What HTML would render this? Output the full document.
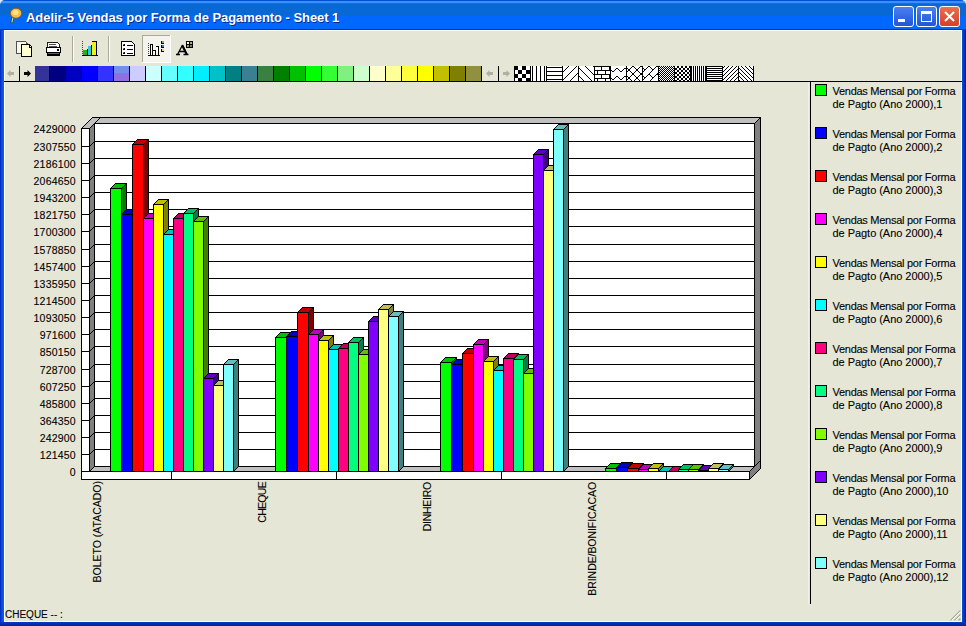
<!DOCTYPE html>
<html><head><meta charset="utf-8"><style>
*{margin:0;padding:0;box-sizing:border-box}
html,body{width:966px;height:626px;overflow:hidden;background:#E0ECF8;font-family:"Liberation Sans",sans-serif}
.abs{position:absolute}
.yl,.cat,.lt,#status{-webkit-text-stroke:0.1px #000}
#title{position:absolute;left:0;top:0;width:966px;height:30px;
 background:linear-gradient(#0050D8 0,#0050D8 1px,#3A90FF 1px,#3A90FF 3px,#1878E8 3px,#0868D4 4px,#0868D4 16px,#0068FF 16px,#0068FF 29px,#0038A8 29px);
 border-radius:5px 5px 0 0}
#ttext{position:absolute;left:26px;top:10px;color:#fff;font-weight:bold;font-size:13px;letter-spacing:-0.05px;text-shadow:1px 1px 0 #0A2890}
#client{position:absolute;left:4px;top:30px;width:958px;height:592px;background:#E5E6D5}
.tb{position:absolute;width:21px;height:21px;top:6px;border:1px solid #fff;border-radius:3px}
.yl{position:absolute;left:20px;width:55.7px;text-align:right;font-size:10.5px;line-height:14px;color:#000;letter-spacing:0.17px}
.cat{position:absolute;top:481px;white-space:nowrap;font-size:10.5px;line-height:12px;color:#000;transform-origin:0 0;transform:rotate(-90deg) translateX(-100%)}
.sw{position:absolute;left:815px;width:12px;height:12px;border:1px solid #000}
.lt{position:absolute;left:832.5px;font-size:11px;line-height:13px;color:#000;letter-spacing:-0.27px;white-space:nowrap}
.pc{position:absolute;top:66px;width:16px;height:15px}
</style></head><body>
<div id="title"></div>
<div id="client"></div><div class="abs" style="left:0;top:30px;width:4px;height:596px;background:linear-gradient(90deg,#0028B8,#0A48D8 40%,#1060F0)"></div><div class="abs" style="left:962px;top:30px;width:4px;height:596px;background:linear-gradient(90deg,#0050E8,#0038C0 50%,#0018A0)"></div><div class="abs" style="left:0;top:622px;width:966px;height:4px;background:linear-gradient(#0838C8,#0020A0)"></div><div class="abs" style="left:4px;top:30px;width:1px;height:592px;background:#FFFFFF"></div><div class="abs" style="left:961px;top:30px;width:1px;height:592px;background:#FFFFFF"></div><div class="abs" style="left:4px;top:621px;width:958px;height:1px;background:#FFFFFF"></div><div class="abs" style="left:4px;top:30px;width:958px;height:1px;background:#FFFFFF"></div>
<div id="ttext">Adelir-5 Vendas por Forma de Pagamento - Sheet 1</div>
<div class="tb" style="left:893px;background:linear-gradient(#4A80F0,#2254D8)"><div class="abs" style="left:4px;top:12px;width:7px;height:3px;background:#fff"></div></div>
<div class="tb" style="left:916px;background:linear-gradient(#4A80F0,#2254D8)"><div class="abs" style="left:4px;top:4px;width:11px;height:11px;border:1px solid #fff;border-top-width:3px"></div></div>
<div class="tb" style="left:939px;background:linear-gradient(#E87050,#D84020)"><svg class="abs" style="left:0;top:0" width="19" height="19"><path d="M5 5 L14 14 M14 5 L5 14" stroke="#fff" stroke-width="2"/></svg></div>
<div class="abs" style="left:4px;top:81px;width:958px;height:1px;background:#000"></div>
<div class="pc" style="left:35px;width:14px;background:#333399"></div><div class="pc" style="left:49px;background:#000080;border-left:1px solid #000"></div><div class="pc" style="left:65px;background:#0000C0;border-left:1px solid #000"></div><div class="pc" style="left:81px;background:#0000FF;border-left:1px solid #000"></div><div class="pc" style="left:97px;background:#3333FF;border-left:1px solid #000"></div><div class="pc" style="left:113px;background:linear-gradient(#7090F0 0,#7090F0 50%,#9070E0 50%);border-left:1px solid #000"></div><div class="pc" style="left:129px;background:#CCCCFF;border-left:1px solid #000"></div><div class="pc" style="left:145px;background:#CCFFFF;border-left:1px solid #000"></div><div class="pc" style="left:161px;background:#66FFFF;border-left:1px solid #000"></div><div class="pc" style="left:177px;background:#33FFFF;border-left:1px solid #000"></div><div class="pc" style="left:193px;background:#00EEFF;border-left:1px solid #000"></div><div class="pc" style="left:209px;background:#00C0C8;border-left:1px solid #000"></div><div class="pc" style="left:225px;background:#008080;border-left:1px solid #000"></div><div class="pc" style="left:241px;background:#3A8090;border-left:1px solid #000"></div><div class="pc" style="left:257px;background:#3A8040;border-left:1px solid #000"></div><div class="pc" style="left:273px;background:#008000;border-left:1px solid #000"></div><div class="pc" style="left:289px;background:#00C000;border-left:1px solid #000"></div><div class="pc" style="left:305px;background:#00FF00;border-left:1px solid #000"></div><div class="pc" style="left:321px;background:#33FF33;border-left:1px solid #000"></div><div class="pc" style="left:337px;background:#80F080;border-left:1px solid #000"></div><div class="pc" style="left:353px;background:#CCFFCC;border-left:1px solid #000"></div><div class="pc" style="left:369px;background:#FFFFCC;border-left:1px solid #000"></div><div class="pc" style="left:385px;background:#FFFF99;border-left:1px solid #000"></div><div class="pc" style="left:401px;background:#FFFF40;border-left:1px solid #000"></div><div class="pc" style="left:417px;background:#FFFF00;border-left:1px solid #000"></div><div class="pc" style="left:433px;background:#C0C000;border-left:1px solid #000"></div><div class="pc" style="left:449px;background:#808000;border-left:1px solid #000"></div><div class="pc" style="left:465px;background:#909040;border-left:1px solid #000"></div>
<svg class="abs" style="left:0;top:0" width="966" height="90" shape-rendering="crispEdges"><defs>
<pattern id="p1" width="8" height="8" patternUnits="userSpaceOnUse" x="514" y="66"><rect width="8" height="8" fill="#fff"/><rect width="4" height="4" fill="#000"/><rect x="4" y="4" width="4" height="4" fill="#000"/></pattern>
<pattern id="p2" width="4" height="4" patternUnits="userSpaceOnUse" x="529" y="66"><rect width="4" height="4" fill="#fff"/><rect x="3" width="1" height="4" fill="#000"/></pattern>
<pattern id="p3" width="4" height="4" patternUnits="userSpaceOnUse" x="545" y="66"><rect width="4" height="4" fill="#fff"/><rect y="1" width="4" height="1" fill="#000"/></pattern>
<pattern id="p4" width="8" height="8" patternUnits="userSpaceOnUse" x="561" y="66"><rect width="8" height="8" fill="#fff"/><path d="M0 8 L8 0" stroke="#000" stroke-width="1" shape-rendering="auto"/></pattern>
<pattern id="p5" width="8" height="8" patternUnits="userSpaceOnUse" x="577" y="66"><rect width="8" height="8" fill="#fff"/><path d="M0 0 L8 8" stroke="#000" stroke-width="1" shape-rendering="auto"/></pattern>
<pattern id="p6" width="8" height="8" patternUnits="userSpaceOnUse" x="593" y="66"><rect width="8" height="8" fill="#fff"/><rect y="0" width="8" height="1" fill="#000"/><rect y="4" width="8" height="1" fill="#000"/><rect x="0" y="0" width="1" height="4" fill="#000"/><rect x="4" y="4" width="1" height="4" fill="#000"/></pattern>
<pattern id="p7" width="8" height="8" patternUnits="userSpaceOnUse" x="609" y="66"><rect width="8" height="8" fill="#fff"/><path d="M0 2 L4 6 L8 2" stroke="#000" fill="none" stroke-width="1" shape-rendering="auto"/></pattern>
<pattern id="p8" width="8" height="8" patternUnits="userSpaceOnUse" x="625" y="66"><rect width="8" height="8" fill="#fff"/><path d="M0 0 L8 8 M8 0 L0 8" stroke="#000" stroke-width="1" shape-rendering="auto"/></pattern>
<pattern id="p9" width="8" height="8" patternUnits="userSpaceOnUse" x="641" y="66"><rect width="8" height="8" fill="#fff"/><path d="M0 8 L8 0 M0 0 L4 4" stroke="#000" stroke-width="1" shape-rendering="auto"/></pattern>
<pattern id="p10" width="2" height="2" patternUnits="userSpaceOnUse" x="657" y="66"><rect width="2" height="2" fill="#fff"/><rect width="1" height="1" fill="#000"/><rect x="1" y="1" width="1" height="1" fill="#000"/></pattern>
<pattern id="p11" width="4" height="4" patternUnits="userSpaceOnUse" x="673" y="66"><rect width="4" height="4" fill="#fff"/><rect width="2" height="2" fill="#000"/><rect x="2" y="2" width="2" height="2" fill="#000"/></pattern>
<pattern id="p12" width="2" height="2" patternUnits="userSpaceOnUse" x="689" y="66"><rect width="2" height="2" fill="#fff"/><rect width="1" height="2" fill="#000"/></pattern>
<pattern id="p13" width="2" height="2" patternUnits="userSpaceOnUse" x="705" y="66"><rect width="2" height="2" fill="#fff"/><rect width="2" height="1" fill="#000"/></pattern>
<pattern id="p14" width="4" height="4" patternUnits="userSpaceOnUse" x="721" y="66"><rect width="4" height="4" fill="#fff"/><path d="M0 4 L4 0" stroke="#000" stroke-width="1" shape-rendering="auto"/></pattern>
<pattern id="p15" width="4" height="4" patternUnits="userSpaceOnUse" x="737" y="66"><rect width="4" height="4" fill="#fff"/><path d="M0 0 L4 4" stroke="#000" stroke-width="1" shape-rendering="auto"/></pattern>
</defs><rect x="514" y="66" width="16" height="15" fill="url(#p1)"/><rect x="514" y="66" width="1" height="15" fill="#000"/><rect x="530" y="66" width="16" height="15" fill="url(#p2)"/><rect x="530" y="66" width="1" height="15" fill="#000"/><rect x="546" y="66" width="16" height="15" fill="url(#p3)"/><rect x="546" y="66" width="1" height="15" fill="#000"/><rect x="562" y="66" width="16" height="15" fill="url(#p4)"/><rect x="562" y="66" width="1" height="15" fill="#000"/><rect x="578" y="66" width="16" height="15" fill="url(#p5)"/><rect x="578" y="66" width="1" height="15" fill="#000"/><rect x="594" y="66" width="16" height="15" fill="url(#p6)"/><rect x="594" y="66" width="1" height="15" fill="#000"/><rect x="610" y="66" width="16" height="15" fill="url(#p7)"/><rect x="610" y="66" width="1" height="15" fill="#000"/><rect x="626" y="66" width="16" height="15" fill="url(#p8)"/><rect x="626" y="66" width="1" height="15" fill="#000"/><rect x="642" y="66" width="16" height="15" fill="url(#p9)"/><rect x="642" y="66" width="1" height="15" fill="#000"/><rect x="658" y="66" width="16" height="15" fill="url(#p10)"/><rect x="658" y="66" width="1" height="15" fill="#000"/><rect x="674" y="66" width="16" height="15" fill="url(#p11)"/><rect x="674" y="66" width="1" height="15" fill="#000"/><rect x="690" y="66" width="16" height="15" fill="url(#p12)"/><rect x="690" y="66" width="1" height="15" fill="#000"/><rect x="706" y="66" width="16" height="15" fill="url(#p13)"/><rect x="706" y="66" width="1" height="15" fill="#000"/><rect x="722" y="66" width="16" height="15" fill="url(#p14)"/><rect x="722" y="66" width="1" height="15" fill="#000"/><rect x="738" y="66" width="16" height="15" fill="url(#p15)"/><rect x="738" y="66" width="1" height="15" fill="#000"/><rect x="753" y="66" width="1" height="15" fill="#000"/><path d="M7 73.5 L10.5 70 L10.5 72 L14 72 L14 75 L10.5 75 L10.5 77 Z" fill="#B0AFA0" shape-rendering="auto"/><rect x="19" y="66" width="1" height="15" fill="#000"/><path d="M24 72 L27.5 72 L27.5 70 L31 73.5 L27.5 77 L27.5 75 L24 75 Z" fill="#000" shape-rendering="auto"/><rect x="481" y="66" width="1" height="15" fill="#000"/><path d="M486 73.5 L489.5 70 L489.5 72 L493 72 L493 75 L489.5 75 L489.5 77 Z" fill="#B0AFA0" shape-rendering="auto"/><rect x="498" y="66" width="1" height="15" fill="#000"/><path d="M503 72 L506.5 72 L506.5 70 L510 73.5 L506.5 77 L506.5 75 L503 75 Z" fill="#B0AFA0" shape-rendering="auto"/><rect x="72" y="36" width="1" height="26" fill="#ACA899"/><rect x="73" y="36" width="1" height="26" fill="#FFFFFF"/><rect x="108" y="36" width="1" height="26" fill="#ACA899"/><rect x="109" y="36" width="1" height="26" fill="#FFFFFF"/><rect x="142" y="35" width="29" height="28" fill="#F4F3EE"/><rect x="142" y="35" width="29" height="1" fill="#ACA899"/><rect x="142" y="35" width="1" height="28" fill="#ACA899"/><rect x="142" y="62" width="29" height="1" fill="#FFFFFF"/><rect x="170" y="35" width="1" height="28" fill="#FFFFFF"/><path d="M21 53.5 L16.5 53.5 L16.5 41.5 L25.5 41.5 L27.5 44" fill="#F8F8E8" stroke="#505050"/><path d="M21.5 44.5 L29.5 44.5 L31.5 46.5 L31.5 56.5 L21.5 56.5 Z" fill="#FFFFD0" stroke="#000"/><path d="M29 45 L29 47 L31 47" fill="#fff" stroke="#000" stroke-width="1"/><path d="M47.5 47.5 L47.5 42.5 L57.5 42.5 L59.5 44.5 L59.5 47.5" fill="#fff" stroke="#202020"/><rect x="49" y="44" width="7" height="1" fill="#505050"/><rect x="49" y="46" width="8" height="1" fill="#505050"/><rect x="46.5" y="47.5" width="14" height="5" fill="#fff" stroke="#000"/><rect x="57" y="49" width="2" height="2" fill="#000"/><rect x="47" y="53" width="13" height="3" fill="#000"/><rect x="48" y="53" width="11" height="1" fill="#606060"/><rect x="82" y="41" width="1" height="1" fill="#404040"/><rect x="82" y="43" width="1" height="1" fill="#404040"/><rect x="82" y="45" width="1" height="1" fill="#404040"/><rect x="82" y="47" width="1" height="1" fill="#404040"/><rect x="82" y="49" width="1" height="1" fill="#404040"/><rect x="82" y="51" width="1" height="1" fill="#404040"/><rect x="82" y="53" width="1" height="1" fill="#404040"/><rect x="83" y="50" width="4" height="5" fill="#22B022"/><rect x="87" y="49" width="1" height="6" fill="#000"/><rect x="88" y="46" width="3" height="9" fill="#30C8E0"/><rect x="91" y="45" width="1" height="10" fill="#000"/><rect x="92" y="42" width="4" height="13" fill="#F0F020"/><rect x="96" y="42" width="1" height="13" fill="#000"/><rect x="92" y="41" width="5" height="1" fill="#000"/><rect x="82" y="55" width="16" height="1" fill="#000"/><path d="M121.5 41.5 L131.5 41.5 L134.5 44.5 L134.5 55.5 L121.5 55.5 Z" fill="#fff" stroke="#000"/><rect x="123" y="44" width="2" height="2" fill="#000"/><rect x="123" y="44" width="1" height="1" fill="#40A040"/><rect x="127" y="45" width="6" height="1" fill="#000"/><rect x="123" y="48" width="2" height="2" fill="#000"/><rect x="123" y="48" width="1" height="1" fill="#40A040"/><rect x="127" y="49" width="6" height="1" fill="#000"/><rect x="123" y="52" width="2" height="2" fill="#000"/><rect x="123" y="52" width="1" height="1" fill="#40A040"/><rect x="127" y="53" width="6" height="1" fill="#000"/><rect x="148" y="43" width="1" height="1" fill="#404040"/><rect x="148" y="45" width="1" height="1" fill="#404040"/><rect x="148" y="47" width="1" height="1" fill="#404040"/><rect x="148" y="49" width="1" height="1" fill="#404040"/><rect x="148" y="51" width="1" height="1" fill="#404040"/><rect x="148" y="53" width="1" height="1" fill="#404040"/><rect x="148" y="55" width="1" height="1" fill="#404040"/><path d="M150.5 54.5 L150.5 44.5 L152.5 44.5 L152.5 54.5 M152.5 50.5 L155.5 50.5 L155.5 54.5 M155.5 46.5 L158.5 46.5 L158.5 54.5" fill="#fff" stroke="#000"/><rect x="148" y="55" width="12" height="1" fill="#000"/><rect x="161" y="41" width="3" height="3" fill="#000"/><rect x="162" y="41" width="2" height="2" fill="#60C060"/><rect x="161" y="45" width="3" height="3" fill="#000"/><rect x="162" y="45" width="2" height="2" fill="#4080C0"/><rect x="161" y="49" width="3" height="3" fill="#000"/><rect x="162" y="49" width="2" height="2" fill="#E0E060"/><path d="M177.5 54.5 L182.5 45 M182.5 45 L187 54.5 M179.5 51.5 L185 51.5 M176 54.5 L180 54.5 M183.5 54.5 L188.5 54.5" stroke="#000" stroke-width="1.3" fill="none" shape-rendering="auto"/><path d="M182.3 45.5 L186.8 54.5" stroke="#000" stroke-width="2" fill="none" shape-rendering="auto"/><rect x="186" y="41" width="7" height="7" fill="#000"/><rect x="187" y="42" width="2" height="2" fill="#fff"/><rect x="190" y="42" width="2" height="2" fill="#80C080"/><rect x="187" y="45" width="2" height="2" fill="#80B080"/><rect x="190" y="45" width="2" height="2" fill="#C06060"/><path d="M13 17.5 L11.5 23" stroke="#203010" stroke-width="2.4" shape-rendering="auto"/><path d="M13 17.5 L11.8 22.5" stroke="#C8E090" stroke-width="1.2" shape-rendering="auto"/><ellipse cx="16" cy="13.2" rx="5.6" ry="5" fill="#F8C040" stroke="#8A5010" stroke-width="0.8" shape-rendering="auto"/><ellipse cx="15.5" cy="12.5" rx="3" ry="2.5" fill="#FFE090" shape-rendering="auto"/></svg>
<svg class="abs" style="left:0;top:0" width="966" height="626" shape-rendering="crispEdges"><polygon points="92.5,117.5 760.5,117.5 754.5,123.5 94.5,123.5" fill="#C0C0C0" stroke="#000" stroke-width="1"/><polygon points="754.5,123.5 760.5,117.5 760.5,460.5 754.5,466.5" fill="#808080" stroke="#000" stroke-width="1"/><polygon points="94.5,123.5 754.5,123.5 754.5,466.5 94.5,466.5" fill="#FFFFFF" stroke="#000" stroke-width="1"/><polygon points="89.5,471.5 94.5,466.5 754.5,466.5 749.5,471.5" fill="#C0C0C0" stroke="#000" stroke-width="1"/><polygon points="749.5,471.5 760.5,460.5 760.5,468.5 749.5,479.5" fill="#808080" stroke="#000" stroke-width="1"/><line x1="754.5" y1="466.5" x2="760.5" y2="460.5" stroke="#000" stroke-width="1"/><polygon points="81.5,471.5 749.5,471.5 749.5,479.5 81.5,479.5" fill="#FFFFFF" stroke="#000" stroke-width="1"/><line x1="171.5" y1="471.5" x2="171.5" y2="479.5" stroke="#000" stroke-width="1"/><line x1="336.5" y1="471.5" x2="336.5" y2="479.5" stroke="#000" stroke-width="1"/><line x1="501.5" y1="471.5" x2="501.5" y2="479.5" stroke="#000" stroke-width="1"/><line x1="666.5" y1="471.5" x2="666.5" y2="479.5" stroke="#000" stroke-width="1"/><polygon points="81.5,128.5 92.5,117.5 100.5,117.5 89.5,128.5" fill="#C0C0C0" stroke="#000" stroke-width="1"/><polygon points="89.5,128.5 94.5,123.5 94.5,466.5 89.5,471.5" fill="#808080" stroke="#000" stroke-width="1"/><polygon points="81.5,128.5 89.5,128.5 89.5,471.5 81.5,471.5" fill="#FFFFFF" stroke="#000" stroke-width="1"/><line x1="94.5" y1="449.5" x2="754.5" y2="449.5" stroke="#000" stroke-width="1"/><line x1="89.5" y1="454.5" x2="94.5" y2="449.5" stroke="#000" stroke-width="1"/><line x1="81.5" y1="454.5" x2="89.5" y2="454.5" stroke="#000" stroke-width="1"/><line x1="94.5" y1="432.5" x2="754.5" y2="432.5" stroke="#000" stroke-width="1"/><line x1="89.5" y1="437.5" x2="94.5" y2="432.5" stroke="#000" stroke-width="1"/><line x1="81.5" y1="437.5" x2="89.5" y2="437.5" stroke="#000" stroke-width="1"/><line x1="94.5" y1="415.5" x2="754.5" y2="415.5" stroke="#000" stroke-width="1"/><line x1="89.5" y1="420.5" x2="94.5" y2="415.5" stroke="#000" stroke-width="1"/><line x1="81.5" y1="420.5" x2="89.5" y2="420.5" stroke="#000" stroke-width="1"/><line x1="94.5" y1="398.5" x2="754.5" y2="398.5" stroke="#000" stroke-width="1"/><line x1="89.5" y1="403.5" x2="94.5" y2="398.5" stroke="#000" stroke-width="1"/><line x1="81.5" y1="403.5" x2="89.5" y2="403.5" stroke="#000" stroke-width="1"/><line x1="94.5" y1="381.5" x2="754.5" y2="381.5" stroke="#000" stroke-width="1"/><line x1="89.5" y1="386.5" x2="94.5" y2="381.5" stroke="#000" stroke-width="1"/><line x1="81.5" y1="386.5" x2="89.5" y2="386.5" stroke="#000" stroke-width="1"/><line x1="94.5" y1="364.5" x2="754.5" y2="364.5" stroke="#000" stroke-width="1"/><line x1="89.5" y1="369.5" x2="94.5" y2="364.5" stroke="#000" stroke-width="1"/><line x1="81.5" y1="369.5" x2="89.5" y2="369.5" stroke="#000" stroke-width="1"/><line x1="94.5" y1="346.5" x2="754.5" y2="346.5" stroke="#000" stroke-width="1"/><line x1="89.5" y1="351.5" x2="94.5" y2="346.5" stroke="#000" stroke-width="1"/><line x1="81.5" y1="351.5" x2="89.5" y2="351.5" stroke="#000" stroke-width="1"/><line x1="94.5" y1="329.5" x2="754.5" y2="329.5" stroke="#000" stroke-width="1"/><line x1="89.5" y1="334.5" x2="94.5" y2="329.5" stroke="#000" stroke-width="1"/><line x1="81.5" y1="334.5" x2="89.5" y2="334.5" stroke="#000" stroke-width="1"/><line x1="94.5" y1="312.5" x2="754.5" y2="312.5" stroke="#000" stroke-width="1"/><line x1="89.5" y1="317.5" x2="94.5" y2="312.5" stroke="#000" stroke-width="1"/><line x1="81.5" y1="317.5" x2="89.5" y2="317.5" stroke="#000" stroke-width="1"/><line x1="94.5" y1="295.5" x2="754.5" y2="295.5" stroke="#000" stroke-width="1"/><line x1="89.5" y1="300.5" x2="94.5" y2="295.5" stroke="#000" stroke-width="1"/><line x1="81.5" y1="300.5" x2="89.5" y2="300.5" stroke="#000" stroke-width="1"/><line x1="94.5" y1="278.5" x2="754.5" y2="278.5" stroke="#000" stroke-width="1"/><line x1="89.5" y1="283.5" x2="94.5" y2="278.5" stroke="#000" stroke-width="1"/><line x1="81.5" y1="283.5" x2="89.5" y2="283.5" stroke="#000" stroke-width="1"/><line x1="94.5" y1="261.5" x2="754.5" y2="261.5" stroke="#000" stroke-width="1"/><line x1="89.5" y1="266.5" x2="94.5" y2="261.5" stroke="#000" stroke-width="1"/><line x1="81.5" y1="266.5" x2="89.5" y2="266.5" stroke="#000" stroke-width="1"/><line x1="94.5" y1="244.5" x2="754.5" y2="244.5" stroke="#000" stroke-width="1"/><line x1="89.5" y1="249.5" x2="94.5" y2="244.5" stroke="#000" stroke-width="1"/><line x1="81.5" y1="249.5" x2="89.5" y2="249.5" stroke="#000" stroke-width="1"/><line x1="94.5" y1="226.5" x2="754.5" y2="226.5" stroke="#000" stroke-width="1"/><line x1="89.5" y1="231.5" x2="94.5" y2="226.5" stroke="#000" stroke-width="1"/><line x1="81.5" y1="231.5" x2="89.5" y2="231.5" stroke="#000" stroke-width="1"/><line x1="94.5" y1="209.5" x2="754.5" y2="209.5" stroke="#000" stroke-width="1"/><line x1="89.5" y1="214.5" x2="94.5" y2="209.5" stroke="#000" stroke-width="1"/><line x1="81.5" y1="214.5" x2="89.5" y2="214.5" stroke="#000" stroke-width="1"/><line x1="94.5" y1="192.5" x2="754.5" y2="192.5" stroke="#000" stroke-width="1"/><line x1="89.5" y1="197.5" x2="94.5" y2="192.5" stroke="#000" stroke-width="1"/><line x1="81.5" y1="197.5" x2="89.5" y2="197.5" stroke="#000" stroke-width="1"/><line x1="94.5" y1="175.5" x2="754.5" y2="175.5" stroke="#000" stroke-width="1"/><line x1="89.5" y1="180.5" x2="94.5" y2="175.5" stroke="#000" stroke-width="1"/><line x1="81.5" y1="180.5" x2="89.5" y2="180.5" stroke="#000" stroke-width="1"/><line x1="94.5" y1="158.5" x2="754.5" y2="158.5" stroke="#000" stroke-width="1"/><line x1="89.5" y1="163.5" x2="94.5" y2="158.5" stroke="#000" stroke-width="1"/><line x1="81.5" y1="163.5" x2="89.5" y2="163.5" stroke="#000" stroke-width="1"/><line x1="94.5" y1="141.5" x2="754.5" y2="141.5" stroke="#000" stroke-width="1"/><line x1="89.5" y1="146.5" x2="94.5" y2="141.5" stroke="#000" stroke-width="1"/><line x1="81.5" y1="146.5" x2="89.5" y2="146.5" stroke="#000" stroke-width="1"/><polygon points="110.5,188.5 115.5,183.5 126.5,183.5 121.5,188.5" fill="#00BF00" stroke="#000" stroke-width="1"/><polygon points="121.5,188.5 126.5,183.5 126.5,466.5 121.5,471.5" fill="#007F00" stroke="#000" stroke-width="1"/><polygon points="110.5,188.5 121.5,188.5 121.5,471.5 110.5,471.5" fill="#00FF00" stroke="#000" stroke-width="1"/><polygon points="121.5,214.5 126.5,209.5 137.5,209.5 132.5,214.5" fill="#0000BF" stroke="#000" stroke-width="1"/><polygon points="132.5,214.5 137.5,209.5 137.5,466.5 132.5,471.5" fill="#00007F" stroke="#000" stroke-width="1"/><polygon points="121.5,214.5 132.5,214.5 132.5,471.5 121.5,471.5" fill="#0000FF" stroke="#000" stroke-width="1"/><polygon points="132.5,144.5 137.5,139.5 148.5,139.5 143.5,144.5" fill="#BF0000" stroke="#000" stroke-width="1"/><polygon points="143.5,144.5 148.5,139.5 148.5,466.5 143.5,471.5" fill="#7F0000" stroke="#000" stroke-width="1"/><polygon points="132.5,144.5 143.5,144.5 143.5,471.5 132.5,471.5" fill="#FF0000" stroke="#000" stroke-width="1"/><polygon points="143.5,218.5 148.5,213.5 158.5,213.5 153.5,218.5" fill="#BF00BF" stroke="#000" stroke-width="1"/><polygon points="153.5,218.5 158.5,213.5 158.5,466.5 153.5,471.5" fill="#7F007F" stroke="#000" stroke-width="1"/><polygon points="143.5,218.5 153.5,218.5 153.5,471.5 143.5,471.5" fill="#FF00FF" stroke="#000" stroke-width="1"/><polygon points="153.5,204.5 158.5,199.5 168.5,199.5 163.5,204.5" fill="#BFBF00" stroke="#000" stroke-width="1"/><polygon points="163.5,204.5 168.5,199.5 168.5,466.5 163.5,471.5" fill="#7F7F00" stroke="#000" stroke-width="1"/><polygon points="153.5,204.5 163.5,204.5 163.5,471.5 153.5,471.5" fill="#FFFF00" stroke="#000" stroke-width="1"/><polygon points="163.5,234.5 168.5,229.5 178.5,229.5 173.5,234.5" fill="#00BFBF" stroke="#000" stroke-width="1"/><polygon points="173.5,234.5 178.5,229.5 178.5,466.5 173.5,471.5" fill="#007F7F" stroke="#000" stroke-width="1"/><polygon points="163.5,234.5 173.5,234.5 173.5,471.5 163.5,471.5" fill="#00FFFF" stroke="#000" stroke-width="1"/><polygon points="173.5,218.5 178.5,213.5 188.5,213.5 183.5,218.5" fill="#BF0060" stroke="#000" stroke-width="1"/><polygon points="183.5,218.5 188.5,213.5 188.5,466.5 183.5,471.5" fill="#7F0040" stroke="#000" stroke-width="1"/><polygon points="173.5,218.5 183.5,218.5 183.5,471.5 173.5,471.5" fill="#FF0080" stroke="#000" stroke-width="1"/><polygon points="183.5,213.5 188.5,208.5 198.5,208.5 193.5,213.5" fill="#00BF60" stroke="#000" stroke-width="1"/><polygon points="193.5,213.5 198.5,208.5 198.5,466.5 193.5,471.5" fill="#007F40" stroke="#000" stroke-width="1"/><polygon points="183.5,213.5 193.5,213.5 193.5,471.5 183.5,471.5" fill="#00FF80" stroke="#000" stroke-width="1"/><polygon points="193.5,221.5 198.5,216.5 208.5,216.5 203.5,221.5" fill="#60BF00" stroke="#000" stroke-width="1"/><polygon points="203.5,221.5 208.5,216.5 208.5,466.5 203.5,471.5" fill="#407F00" stroke="#000" stroke-width="1"/><polygon points="193.5,221.5 203.5,221.5 203.5,471.5 193.5,471.5" fill="#80FF00" stroke="#000" stroke-width="1"/><polygon points="203.5,378.5 208.5,373.5 218.5,373.5 213.5,378.5" fill="#6000BF" stroke="#000" stroke-width="1"/><polygon points="213.5,378.5 218.5,373.5 218.5,466.5 213.5,471.5" fill="#40007F" stroke="#000" stroke-width="1"/><polygon points="203.5,378.5 213.5,378.5 213.5,471.5 203.5,471.5" fill="#8000FF" stroke="#000" stroke-width="1"/><polygon points="213.5,385.5 218.5,380.5 228.5,380.5 223.5,385.5" fill="#BFBF60" stroke="#000" stroke-width="1"/><polygon points="223.5,385.5 228.5,380.5 228.5,466.5 223.5,471.5" fill="#7F7F40" stroke="#000" stroke-width="1"/><polygon points="213.5,385.5 223.5,385.5 223.5,471.5 213.5,471.5" fill="#FFFF80" stroke="#000" stroke-width="1"/><polygon points="223.5,364.5 228.5,359.5 238.5,359.5 233.5,364.5" fill="#60BFBF" stroke="#000" stroke-width="1"/><polygon points="233.5,364.5 238.5,359.5 238.5,466.5 233.5,471.5" fill="#407F7F" stroke="#000" stroke-width="1"/><polygon points="223.5,364.5 233.5,364.5 233.5,471.5 223.5,471.5" fill="#80FFFF" stroke="#000" stroke-width="1"/><polygon points="275.5,337.5 280.5,332.5 291.5,332.5 286.5,337.5" fill="#00BF00" stroke="#000" stroke-width="1"/><polygon points="286.5,337.5 291.5,332.5 291.5,466.5 286.5,471.5" fill="#007F00" stroke="#000" stroke-width="1"/><polygon points="275.5,337.5 286.5,337.5 286.5,471.5 275.5,471.5" fill="#00FF00" stroke="#000" stroke-width="1"/><polygon points="286.5,336.5 291.5,331.5 302.5,331.5 297.5,336.5" fill="#0000BF" stroke="#000" stroke-width="1"/><polygon points="297.5,336.5 302.5,331.5 302.5,466.5 297.5,471.5" fill="#00007F" stroke="#000" stroke-width="1"/><polygon points="286.5,336.5 297.5,336.5 297.5,471.5 286.5,471.5" fill="#0000FF" stroke="#000" stroke-width="1"/><polygon points="297.5,312.5 302.5,307.5 313.5,307.5 308.5,312.5" fill="#BF0000" stroke="#000" stroke-width="1"/><polygon points="308.5,312.5 313.5,307.5 313.5,466.5 308.5,471.5" fill="#7F0000" stroke="#000" stroke-width="1"/><polygon points="297.5,312.5 308.5,312.5 308.5,471.5 297.5,471.5" fill="#FF0000" stroke="#000" stroke-width="1"/><polygon points="308.5,334.5 313.5,329.5 323.5,329.5 318.5,334.5" fill="#BF00BF" stroke="#000" stroke-width="1"/><polygon points="318.5,334.5 323.5,329.5 323.5,466.5 318.5,471.5" fill="#7F007F" stroke="#000" stroke-width="1"/><polygon points="308.5,334.5 318.5,334.5 318.5,471.5 308.5,471.5" fill="#FF00FF" stroke="#000" stroke-width="1"/><polygon points="318.5,340.5 323.5,335.5 333.5,335.5 328.5,340.5" fill="#BFBF00" stroke="#000" stroke-width="1"/><polygon points="328.5,340.5 333.5,335.5 333.5,466.5 328.5,471.5" fill="#7F7F00" stroke="#000" stroke-width="1"/><polygon points="318.5,340.5 328.5,340.5 328.5,471.5 318.5,471.5" fill="#FFFF00" stroke="#000" stroke-width="1"/><polygon points="328.5,349.5 333.5,344.5 343.5,344.5 338.5,349.5" fill="#00BFBF" stroke="#000" stroke-width="1"/><polygon points="338.5,349.5 343.5,344.5 343.5,466.5 338.5,471.5" fill="#007F7F" stroke="#000" stroke-width="1"/><polygon points="328.5,349.5 338.5,349.5 338.5,471.5 328.5,471.5" fill="#00FFFF" stroke="#000" stroke-width="1"/><polygon points="338.5,348.5 343.5,343.5 353.5,343.5 348.5,348.5" fill="#BF0060" stroke="#000" stroke-width="1"/><polygon points="348.5,348.5 353.5,343.5 353.5,466.5 348.5,471.5" fill="#7F0040" stroke="#000" stroke-width="1"/><polygon points="338.5,348.5 348.5,348.5 348.5,471.5 338.5,471.5" fill="#FF0080" stroke="#000" stroke-width="1"/><polygon points="348.5,342.5 353.5,337.5 363.5,337.5 358.5,342.5" fill="#00BF60" stroke="#000" stroke-width="1"/><polygon points="358.5,342.5 363.5,337.5 363.5,466.5 358.5,471.5" fill="#007F40" stroke="#000" stroke-width="1"/><polygon points="348.5,342.5 358.5,342.5 358.5,471.5 348.5,471.5" fill="#00FF80" stroke="#000" stroke-width="1"/><polygon points="358.5,354.5 363.5,349.5 373.5,349.5 368.5,354.5" fill="#60BF00" stroke="#000" stroke-width="1"/><polygon points="368.5,354.5 373.5,349.5 373.5,466.5 368.5,471.5" fill="#407F00" stroke="#000" stroke-width="1"/><polygon points="358.5,354.5 368.5,354.5 368.5,471.5 358.5,471.5" fill="#80FF00" stroke="#000" stroke-width="1"/><polygon points="368.5,321.5 373.5,316.5 383.5,316.5 378.5,321.5" fill="#6000BF" stroke="#000" stroke-width="1"/><polygon points="378.5,321.5 383.5,316.5 383.5,466.5 378.5,471.5" fill="#40007F" stroke="#000" stroke-width="1"/><polygon points="368.5,321.5 378.5,321.5 378.5,471.5 368.5,471.5" fill="#8000FF" stroke="#000" stroke-width="1"/><polygon points="378.5,309.5 383.5,304.5 393.5,304.5 388.5,309.5" fill="#BFBF60" stroke="#000" stroke-width="1"/><polygon points="388.5,309.5 393.5,304.5 393.5,466.5 388.5,471.5" fill="#7F7F40" stroke="#000" stroke-width="1"/><polygon points="378.5,309.5 388.5,309.5 388.5,471.5 378.5,471.5" fill="#FFFF80" stroke="#000" stroke-width="1"/><polygon points="388.5,316.5 393.5,311.5 403.5,311.5 398.5,316.5" fill="#60BFBF" stroke="#000" stroke-width="1"/><polygon points="398.5,316.5 403.5,311.5 403.5,466.5 398.5,471.5" fill="#407F7F" stroke="#000" stroke-width="1"/><polygon points="388.5,316.5 398.5,316.5 398.5,471.5 388.5,471.5" fill="#80FFFF" stroke="#000" stroke-width="1"/><polygon points="440.5,362.5 445.5,357.5 456.5,357.5 451.5,362.5" fill="#00BF00" stroke="#000" stroke-width="1"/><polygon points="451.5,362.5 456.5,357.5 456.5,466.5 451.5,471.5" fill="#007F00" stroke="#000" stroke-width="1"/><polygon points="440.5,362.5 451.5,362.5 451.5,471.5 440.5,471.5" fill="#00FF00" stroke="#000" stroke-width="1"/><polygon points="451.5,364.5 456.5,359.5 467.5,359.5 462.5,364.5" fill="#0000BF" stroke="#000" stroke-width="1"/><polygon points="462.5,364.5 467.5,359.5 467.5,466.5 462.5,471.5" fill="#00007F" stroke="#000" stroke-width="1"/><polygon points="451.5,364.5 462.5,364.5 462.5,471.5 451.5,471.5" fill="#0000FF" stroke="#000" stroke-width="1"/><polygon points="462.5,353.5 467.5,348.5 478.5,348.5 473.5,353.5" fill="#BF0000" stroke="#000" stroke-width="1"/><polygon points="473.5,353.5 478.5,348.5 478.5,466.5 473.5,471.5" fill="#7F0000" stroke="#000" stroke-width="1"/><polygon points="462.5,353.5 473.5,353.5 473.5,471.5 462.5,471.5" fill="#FF0000" stroke="#000" stroke-width="1"/><polygon points="473.5,344.5 478.5,339.5 488.5,339.5 483.5,344.5" fill="#BF00BF" stroke="#000" stroke-width="1"/><polygon points="483.5,344.5 488.5,339.5 488.5,466.5 483.5,471.5" fill="#7F007F" stroke="#000" stroke-width="1"/><polygon points="473.5,344.5 483.5,344.5 483.5,471.5 473.5,471.5" fill="#FF00FF" stroke="#000" stroke-width="1"/><polygon points="483.5,361.5 488.5,356.5 498.5,356.5 493.5,361.5" fill="#BFBF00" stroke="#000" stroke-width="1"/><polygon points="493.5,361.5 498.5,356.5 498.5,466.5 493.5,471.5" fill="#7F7F00" stroke="#000" stroke-width="1"/><polygon points="483.5,361.5 493.5,361.5 493.5,471.5 483.5,471.5" fill="#FFFF00" stroke="#000" stroke-width="1"/><polygon points="493.5,370.5 498.5,365.5 508.5,365.5 503.5,370.5" fill="#00BFBF" stroke="#000" stroke-width="1"/><polygon points="503.5,370.5 508.5,365.5 508.5,466.5 503.5,471.5" fill="#007F7F" stroke="#000" stroke-width="1"/><polygon points="493.5,370.5 503.5,370.5 503.5,471.5 493.5,471.5" fill="#00FFFF" stroke="#000" stroke-width="1"/><polygon points="503.5,358.5 508.5,353.5 518.5,353.5 513.5,358.5" fill="#BF0060" stroke="#000" stroke-width="1"/><polygon points="513.5,358.5 518.5,353.5 518.5,466.5 513.5,471.5" fill="#7F0040" stroke="#000" stroke-width="1"/><polygon points="503.5,358.5 513.5,358.5 513.5,471.5 503.5,471.5" fill="#FF0080" stroke="#000" stroke-width="1"/><polygon points="513.5,359.5 518.5,354.5 528.5,354.5 523.5,359.5" fill="#00BF60" stroke="#000" stroke-width="1"/><polygon points="523.5,359.5 528.5,354.5 528.5,466.5 523.5,471.5" fill="#007F40" stroke="#000" stroke-width="1"/><polygon points="513.5,359.5 523.5,359.5 523.5,471.5 513.5,471.5" fill="#00FF80" stroke="#000" stroke-width="1"/><polygon points="523.5,373.5 528.5,368.5 538.5,368.5 533.5,373.5" fill="#60BF00" stroke="#000" stroke-width="1"/><polygon points="533.5,373.5 538.5,368.5 538.5,466.5 533.5,471.5" fill="#407F00" stroke="#000" stroke-width="1"/><polygon points="523.5,373.5 533.5,373.5 533.5,471.5 523.5,471.5" fill="#80FF00" stroke="#000" stroke-width="1"/><polygon points="533.5,154.5 538.5,149.5 548.5,149.5 543.5,154.5" fill="#6000BF" stroke="#000" stroke-width="1"/><polygon points="543.5,154.5 548.5,149.5 548.5,466.5 543.5,471.5" fill="#40007F" stroke="#000" stroke-width="1"/><polygon points="533.5,154.5 543.5,154.5 543.5,471.5 533.5,471.5" fill="#8000FF" stroke="#000" stroke-width="1"/><polygon points="543.5,170.5 548.5,165.5 558.5,165.5 553.5,170.5" fill="#BFBF60" stroke="#000" stroke-width="1"/><polygon points="553.5,170.5 558.5,165.5 558.5,466.5 553.5,471.5" fill="#7F7F40" stroke="#000" stroke-width="1"/><polygon points="543.5,170.5 553.5,170.5 553.5,471.5 543.5,471.5" fill="#FFFF80" stroke="#000" stroke-width="1"/><polygon points="553.5,129.5 558.5,124.5 568.5,124.5 563.5,129.5" fill="#60BFBF" stroke="#000" stroke-width="1"/><polygon points="563.5,129.5 568.5,124.5 568.5,466.5 563.5,471.5" fill="#407F7F" stroke="#000" stroke-width="1"/><polygon points="553.5,129.5 563.5,129.5 563.5,471.5 553.5,471.5" fill="#80FFFF" stroke="#000" stroke-width="1"/><polygon points="605.5,468.5 610.5,463.5 621.5,463.5 616.5,468.5" fill="#00BF00" stroke="#000" stroke-width="1"/><polygon points="616.5,468.5 621.5,463.5 621.5,466.5 616.5,471.5" fill="#007F00" stroke="#000" stroke-width="1"/><polygon points="605.5,468.5 616.5,468.5 616.5,471.5 605.5,471.5" fill="#00FF00" stroke="#000" stroke-width="1"/><polygon points="616.5,467.5 621.5,462.5 632.5,462.5 627.5,467.5" fill="#0000BF" stroke="#000" stroke-width="1"/><polygon points="627.5,467.5 632.5,462.5 632.5,466.5 627.5,471.5" fill="#00007F" stroke="#000" stroke-width="1"/><polygon points="616.5,467.5 627.5,467.5 627.5,471.5 616.5,471.5" fill="#0000FF" stroke="#000" stroke-width="1"/><polygon points="627.5,468.5 632.5,463.5 643.5,463.5 638.5,468.5" fill="#BF0000" stroke="#000" stroke-width="1"/><polygon points="638.5,468.5 643.5,463.5 643.5,466.5 638.5,471.5" fill="#7F0000" stroke="#000" stroke-width="1"/><polygon points="627.5,468.5 638.5,468.5 638.5,471.5 627.5,471.5" fill="#FF0000" stroke="#000" stroke-width="1"/><polygon points="638.5,469.5 643.5,464.5 653.5,464.5 648.5,469.5" fill="#BF00BF" stroke="#000" stroke-width="1"/><polygon points="648.5,469.5 653.5,464.5 653.5,466.5 648.5,471.5" fill="#7F007F" stroke="#000" stroke-width="1"/><polygon points="638.5,469.5 648.5,469.5 648.5,471.5 638.5,471.5" fill="#FF00FF" stroke="#000" stroke-width="1"/><polygon points="648.5,468.5 653.5,463.5 663.5,463.5 658.5,468.5" fill="#BFBF00" stroke="#000" stroke-width="1"/><polygon points="658.5,468.5 663.5,463.5 663.5,466.5 658.5,471.5" fill="#7F7F00" stroke="#000" stroke-width="1"/><polygon points="648.5,468.5 658.5,468.5 658.5,471.5 648.5,471.5" fill="#FFFF00" stroke="#000" stroke-width="1"/><polygon points="658.5,471.5 663.5,466.5 673.5,466.5 668.5,471.5" fill="#00BFBF" stroke="#000" stroke-width="1"/><polygon points="668.5,471.5 673.5,466.5 673.5,466.5 668.5,471.5" fill="#007F7F" stroke="#000" stroke-width="1"/><polygon points="658.5,471.5 668.5,471.5 668.5,471.5 658.5,471.5" fill="#00FFFF" stroke="#000" stroke-width="1"/><polygon points="668.5,471.5 673.5,466.5 683.5,466.5 678.5,471.5" fill="#BF0060" stroke="#000" stroke-width="1"/><polygon points="678.5,471.5 683.5,466.5 683.5,466.5 678.5,471.5" fill="#7F0040" stroke="#000" stroke-width="1"/><polygon points="668.5,471.5 678.5,471.5 678.5,471.5 668.5,471.5" fill="#FF0080" stroke="#000" stroke-width="1"/><polygon points="678.5,469.5 683.5,464.5 693.5,464.5 688.5,469.5" fill="#00BF60" stroke="#000" stroke-width="1"/><polygon points="688.5,469.5 693.5,464.5 693.5,466.5 688.5,471.5" fill="#007F40" stroke="#000" stroke-width="1"/><polygon points="678.5,469.5 688.5,469.5 688.5,471.5 678.5,471.5" fill="#00FF80" stroke="#000" stroke-width="1"/><polygon points="688.5,469.5 693.5,464.5 703.5,464.5 698.5,469.5" fill="#60BF00" stroke="#000" stroke-width="1"/><polygon points="698.5,469.5 703.5,464.5 703.5,466.5 698.5,471.5" fill="#407F00" stroke="#000" stroke-width="1"/><polygon points="688.5,469.5 698.5,469.5 698.5,471.5 688.5,471.5" fill="#80FF00" stroke="#000" stroke-width="1"/><polygon points="698.5,470.5 703.5,465.5 713.5,465.5 708.5,470.5" fill="#6000BF" stroke="#000" stroke-width="1"/><polygon points="708.5,470.5 713.5,465.5 713.5,466.5 708.5,471.5" fill="#40007F" stroke="#000" stroke-width="1"/><polygon points="698.5,470.5 708.5,470.5 708.5,471.5 698.5,471.5" fill="#8000FF" stroke="#000" stroke-width="1"/><polygon points="708.5,468.5 713.5,463.5 723.5,463.5 718.5,468.5" fill="#BFBF60" stroke="#000" stroke-width="1"/><polygon points="718.5,468.5 723.5,463.5 723.5,466.5 718.5,471.5" fill="#7F7F40" stroke="#000" stroke-width="1"/><polygon points="708.5,468.5 718.5,468.5 718.5,471.5 708.5,471.5" fill="#FFFF80" stroke="#000" stroke-width="1"/><polygon points="718.5,469.5 723.5,464.5 733.5,464.5 728.5,469.5" fill="#60BFBF" stroke="#000" stroke-width="1"/><polygon points="728.5,469.5 733.5,464.5 733.5,466.5 728.5,471.5" fill="#407F7F" stroke="#000" stroke-width="1"/><polygon points="718.5,469.5 728.5,469.5 728.5,471.5 718.5,471.5" fill="#80FFFF" stroke="#000" stroke-width="1"/></svg>
<div class="yl" style="top:465px">0</div><div class="yl" style="top:448px">121450</div><div class="yl" style="top:431px">242900</div><div class="yl" style="top:414px">364350</div><div class="yl" style="top:397px">485800</div><div class="yl" style="top:380px">607250</div><div class="yl" style="top:363px">728700</div><div class="yl" style="top:345px">850150</div><div class="yl" style="top:328px">971600</div><div class="yl" style="top:311px">1093050</div><div class="yl" style="top:294px">1214500</div><div class="yl" style="top:277px">1335950</div><div class="yl" style="top:260px">1457400</div><div class="yl" style="top:243px">1578850</div><div class="yl" style="top:225px">1700300</div><div class="yl" style="top:208px">1821750</div><div class="yl" style="top:191px">1943200</div><div class="yl" style="top:174px">2064650</div><div class="yl" style="top:157px">2186100</div><div class="yl" style="top:140px">2307550</div><div class="yl" style="top:122px">2429000</div>
<div class="cat" style="left:91px;top:481px;letter-spacing:0px">BOLETO (ATACADO)</div><div class="cat" style="left:256px;top:482.2px;letter-spacing:-0.7px">CHEQUE</div><div class="cat" style="left:421px;top:481.75px;letter-spacing:-0.25px">DINHEIRO</div><div class="cat" style="left:586px;top:481.57px;letter-spacing:-0.07px">BRINDE/BONIFICACAO</div>
<div class="abs" style="left:810px;top:82px;width:1px;height:522px;background:#000"></div><div class="abs" style="left:808px;top:82px;width:1px;height:522px;background:#F0F0E4"></div>
<div class="sw" style="top:84px;background:#00FF00"></div><div class="lt" style="top:85px">Vendas Mensal por Forma<br><span style="letter-spacing:-0.04px">de Pagto (Ano 2000),1</span></div><div class="sw" style="top:127px;background:#0000FF"></div><div class="lt" style="top:128px">Vendas Mensal por Forma<br><span style="letter-spacing:-0.04px">de Pagto (Ano 2000),2</span></div><div class="sw" style="top:170px;background:#FF0000"></div><div class="lt" style="top:171px">Vendas Mensal por Forma<br><span style="letter-spacing:-0.04px">de Pagto (Ano 2000),3</span></div><div class="sw" style="top:213px;background:#FF00FF"></div><div class="lt" style="top:214px">Vendas Mensal por Forma<br><span style="letter-spacing:-0.04px">de Pagto (Ano 2000),4</span></div><div class="sw" style="top:256px;background:#FFFF00"></div><div class="lt" style="top:257px">Vendas Mensal por Forma<br><span style="letter-spacing:-0.04px">de Pagto (Ano 2000),5</span></div><div class="sw" style="top:299px;background:#00FFFF"></div><div class="lt" style="top:300px">Vendas Mensal por Forma<br><span style="letter-spacing:-0.04px">de Pagto (Ano 2000),6</span></div><div class="sw" style="top:342px;background:#FF0080"></div><div class="lt" style="top:343px">Vendas Mensal por Forma<br><span style="letter-spacing:-0.04px">de Pagto (Ano 2000),7</span></div><div class="sw" style="top:385px;background:#00FF80"></div><div class="lt" style="top:386px">Vendas Mensal por Forma<br><span style="letter-spacing:-0.04px">de Pagto (Ano 2000),8</span></div><div class="sw" style="top:428px;background:#80FF00"></div><div class="lt" style="top:429px">Vendas Mensal por Forma<br><span style="letter-spacing:-0.04px">de Pagto (Ano 2000),9</span></div><div class="sw" style="top:471px;background:#8000FF"></div><div class="lt" style="top:472px">Vendas Mensal por Forma<br><span style="letter-spacing:-0.04px">de Pagto (Ano 2000),10</span></div><div class="sw" style="top:514px;background:#FFFF80"></div><div class="lt" style="top:515px">Vendas Mensal por Forma<br><span style="letter-spacing:-0.04px">de Pagto (Ano 2000),11</span></div><div class="sw" style="top:557px;background:#80FFFF"></div><div class="lt" style="top:558px">Vendas Mensal por Forma<br><span style="letter-spacing:-0.04px">de Pagto (Ano 2000),12</span></div>
<svg class="abs" style="left:946px;top:606px" width="16" height="16"><path d="M14.5 4.5 L4.5 14.5 M14.5 8.5 L8.5 14.5 M14.5 12.5 L12.5 14.5" stroke="#A8A898" stroke-width="1.3" fill="none"/><path d="M14.5 5.5 L5.5 14.5 M14.5 9.5 L9.5 14.5" stroke="#FFFFFF" stroke-width="0.8" fill="none"/></svg>
<div id="status" class="abs" style="left:5px;top:608px;font-size:10px;line-height:14px">CHEQUE -- :</div>
</body></html>
